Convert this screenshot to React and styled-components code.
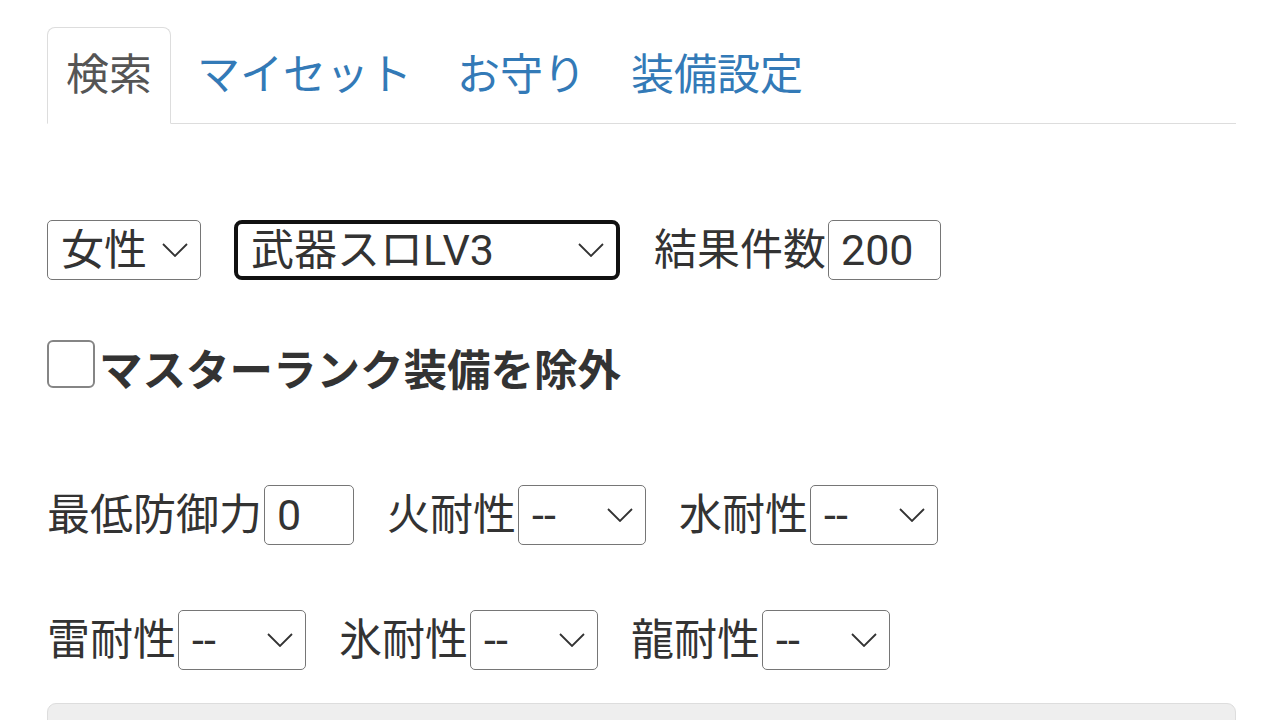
import React from "react";
import styled, { createGlobalStyle } from "styled-components";

const GlobalStyle = createGlobalStyle`
  body {
    margin: 0;
    background: #fff;
    color: #333;
    font-family: Roboto, "Noto Sans CJK JP", "Noto Sans", sans-serif;
  }
`;

const tabs = ["検索", "マイセット", "お守り", "装備設定"];

const Chevron = () => (
  <svg width="26" height="14" viewBox="0 0 26 14">
    <polyline points="1,1 13,13 25,1" fill="none" stroke="#333" strokeWidth="1.8" />
  </svg>
);

const Select = ({ width, focused, children }) => (
  <SelectBox $width={width} $focused={focused}>
    <SelectField defaultValue={children}>
      <option>{children}</option>
    </SelectField>
    <ChevronWrap>
      <Chevron />
    </ChevronWrap>
  </SelectBox>
);

const App = () => {
  return (
    <Page>
      <GlobalStyle />
      <TabBar>
        {tabs.map((t, i) => (
          <Tab key={t} $active={i === 0}>
            {t}
          </Tab>
        ))}
      </TabBar>

      <Row $top={96}>
        <Gap $right={33}>
          <Select width={154}>女性</Select>
        </Gap>
        <Gap $right={34}>
          <Select width={386} focused>
            武器スロLV3
          </Select>
        </Gap>
        <Label>結果件数</Label>
        <NumberInput $width={113} defaultValue="200" />
      </Row>

      <CheckRow>
        <CheckBox />
        <CheckLabel>マスターランク装備を除外</CheckLabel>
      </CheckRow>

      <Row $top={83}>
        <Gap $right={33}>
          <Label>最低防御力</Label>
          <NumberInput $width={90} defaultValue="0" />
        </Gap>
        <Gap $right={33}>
          <Label>火耐性</Label>
          <Select width={128}>--</Select>
        </Gap>
        <Gap>
          <Label>水耐性</Label>
          <Select width={128}>--</Select>
        </Gap>
      </Row>

      <Row $top={65}>
        <Gap $right={33}>
          <Label>雷耐性</Label>
          <Select width={128}>--</Select>
        </Gap>
        <Gap $right={33}>
          <Label>氷耐性</Label>
          <Select width={128}>--</Select>
        </Gap>
        <Gap>
          <Label>龍耐性</Label>
          <Select width={128}>--</Select>
        </Gap>
      </Row>

      <Well />
    </Page>
  );
};

const Page = styled.div`
  padding: 27px 44px 0 47px;
  height: 720px;
  box-sizing: border-box;
  overflow: hidden;
`;

const TabBar = styled.div`
  display: flex;
  border-bottom: 1px solid #ddd;
`;

const Tab = styled.a`
  display: block;
  padding: 17px 18px;
  margin-right: 7px;
  margin-bottom: -1px;
  font-size: 43px;
  line-height: 61px;
  border: 1px solid ${({ $active }) => ($active ? "#ddd" : "transparent")};
  border-bottom-color: ${({ $active }) => ($active ? "#fff" : "transparent")};
  border-radius: 8px 8px 0 0;
  background: ${({ $active }) => ($active ? "#fff" : "transparent")};
  color: ${({ $active }) => ($active ? "#555" : "#337ab7")};
  cursor: pointer;
`;

const Row = styled.div`
  display: flex;
  align-items: center;
  height: 60px;
  margin-top: ${({ $top }) => $top}px;
`;

const Gap = styled.div`
  display: flex;
  align-items: center;
  margin-right: ${({ $right }) => $right || 0}px;
`;

const Label = styled.span`
  font-size: 43px;
  line-height: 60px;
  margin-right: 2px;
  white-space: nowrap;
`;

const SelectBox = styled.div`
  position: relative;
  width: ${({ $width }) => $width}px;
  height: 60px;
  box-sizing: border-box;
  border: ${({ $focused }) => ($focused ? "4px solid #111" : "1px solid #767676")};
  border-radius: ${({ $focused }) => ($focused ? "8px" : "5px")};
  background: #fff;
`;

const SelectField = styled.select`
  appearance: none;
  width: 100%;
  height: 100%;
  border: none;
  outline: none;
  background: transparent;
  padding: 0 0 0 13px;
  font-family: inherit;
  font-size: 43px;
  color: #333;
  line-height: 1;
`;

const ChevronWrap = styled.span`
  position: absolute;
  right: 12px;
  top: 50%;
  transform: translateY(-50%);
  display: flex;
  pointer-events: none;
`;

const NumberInput = styled.input`
  width: ${({ $width }) => $width}px;
  height: 60px;
  box-sizing: border-box;
  border: 1px solid #767676;
  border-radius: 5px;
  padding: 0 12px;
  font-family: inherit;
  font-size: 43px;
  color: #333;
  outline: none;
`;

const CheckRow = styled.label`
  display: flex;
  align-items: flex-start;
  margin-top: 61px;
`;

const CheckBox = styled.span`
  display: block;
  width: 48px;
  height: 48px;
  box-sizing: border-box;
  border: 2px solid #858585;
  border-radius: 6px;
  margin-top: -1px;
  margin-right: 4px;
  background: #fff;
`;

const CheckLabel = styled.span`
  font-size: 43.5px;
  font-weight: 700;
  line-height: 61px;
`;

const Well = styled.div`
  margin-top: 33px;
  height: 120px;
  background: #eee;
  border: 1px solid #ddd;
  border-radius: 9px;
`;

export default App;
